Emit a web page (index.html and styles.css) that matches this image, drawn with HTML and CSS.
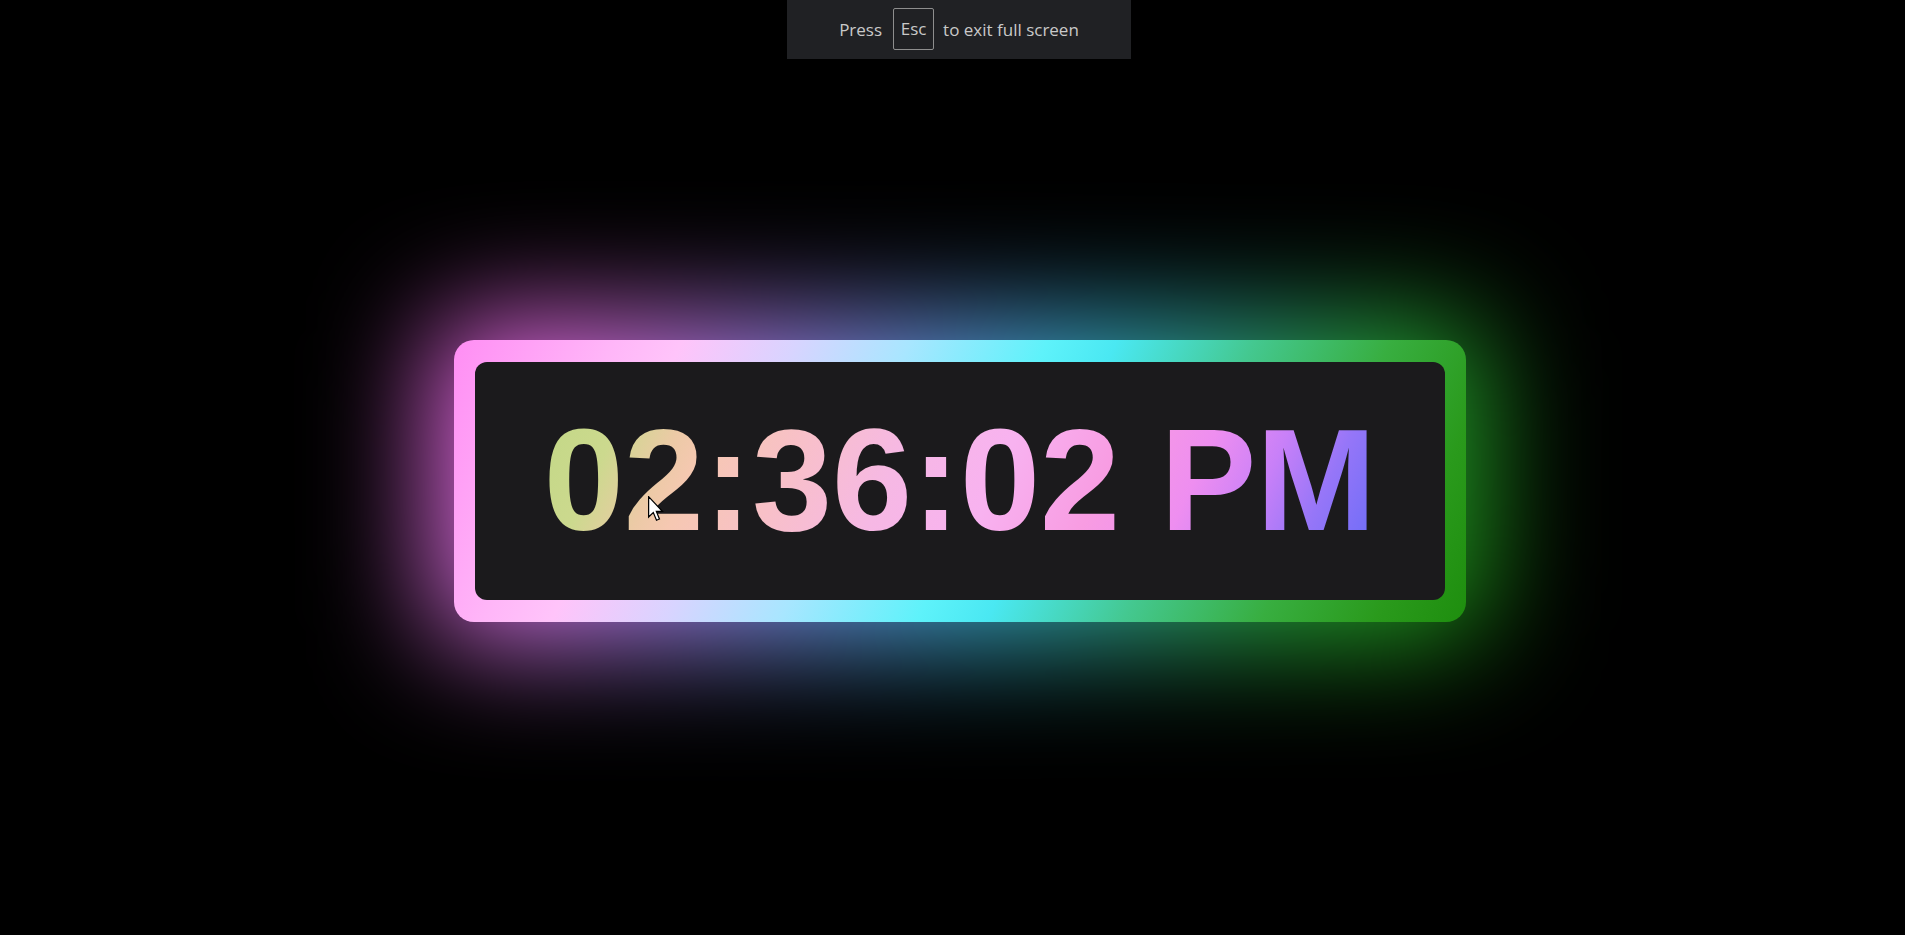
FILE: index.html
```html
<!DOCTYPE html>
<html lang="en">
<head>
<meta charset="utf-8">
<title>Neon Clock</title>
<link rel="stylesheet" href="styles.css">
</head>
<body>
<div class="fs-notice">
  <span class="fs-text fs-press">Press</span>
  <span class="fs-key">Esc</span>
  <span class="fs-text">to exit full screen</span>
</div>
<main class="stage">
  <div class="clock">
    <div class="face">
      <span class="time">02:36:02 PM</span>
    </div>
  </div>
</main>
<svg class="cursor" width="16" height="26" viewBox="0 0 13 21" aria-hidden="true">
  <path d="M0.5 0.5 L0.5 17 L4.3 13.4 L6.9 19.6 L9.3 18.6 L6.8 12.5 L11.8 12.5 Z" fill="#ffffff" stroke="#000000" stroke-width="1" stroke-linejoin="miter"/>
</svg>
</body>
</html>
```
FILE: styles.css
```css
html {
  margin: 0;
  padding: 0;
  background: #000000;
}

body {
  margin: 0;
  padding: 0;
  position: relative;
  min-height: 935px;
  overflow: hidden;
}

.stage {
  isolation: isolate;
  height: 935px;
  box-sizing: border-box;
  padding: 27px 0 0 15px;
  display: flex;
  align-items: center;
  justify-content: center;
}

.clock {
  position: relative;
  width: 1012px;
  height: 282px;
  box-sizing: border-box;
  padding: 22px 21px;
  border-radius: 20px;
  background: linear-gradient(115deg,
    #ff8ef4 0%,
    #ffb6f8 14%,
    #ffc4fa 20%,
    #d8d4ff 30%,
    #a8e6ff 40%,
    #5ef2fa 52%,
    #4ae8f2 58%,
    #44c890 70%,
    #38ae40 82%,
    #2a9a1c 92%,
    #1e8e0e 100%);
}

.clock::before {
  content: "";
  position: absolute;
  inset: -22px;
  border-radius: 40px;
  background: linear-gradient(115deg,
    #e860e0 0%,
    #d46cd8 16%,
    #9a78dc 30%,
    #5c90d8 44%,
    #34a4c4 56%,
    #2c9c84 68%,
    #24a030 82%,
    #1e9010 100%);
  filter: blur(58px);
  z-index: -1;
}

.face {
  height: 100%;
  border-radius: 12px;
  background: #1b1a1c;
  display: flex;
  align-items: center;
  justify-content: center;
}

.time {
  font-family: "Liberation Sans", Arial, sans-serif;
  font-weight: 700;
  font-size: 144px;
  line-height: 1;
  letter-spacing: 0;
  white-space: nowrap;
  color: transparent;
  background: linear-gradient(115deg,
    #c2d886 0%,
    #ccd98e 9%,
    #eccaa6 16%,
    #f6c8b2 20%,
    #f8c0c8 30%,
    #f6b8e4 42%,
    #f8b2f0 54%,
    #f89ce2 66%,
    #ee8ef0 76%,
    #c880f8 84%,
    #9676f8 91%,
    #6a6cf8 100%);
  -webkit-background-clip: text;
  background-clip: text;
}

.fs-notice {
  position: absolute;
  top: 0;
  left: 787px;
  width: 344px;
  height: 59px;
  background: #202124;
  display: flex;
  align-items: center;
  justify-content: center;
  font-family: "Open Sans", "Noto Sans", sans-serif;
  font-size: 17px;
  color: #c9c9c9;
  z-index: 5;
}

.fs-press {
  margin-right: 11px;
}

.fs-key {
  box-sizing: border-box;
  width: 41px;
  height: 42px;
  margin: -2px 9px 0 0;
  border: 1px solid #8e8e8e;
  border-radius: 2px;
  display: flex;
  align-items: center;
  justify-content: center;
}

.cursor {
  position: absolute;
  left: 648px;
  top: 496px;
  z-index: 6;
}
```
